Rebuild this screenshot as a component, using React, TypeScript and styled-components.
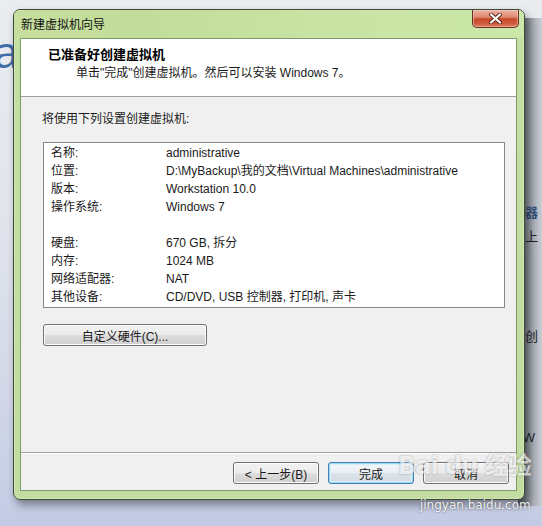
import React from "react";
import styled, { createGlobalStyle } from "styled-components";

const GlobalStyle = createGlobalStyle`
  html, body { margin: 0; padding: 0; }
  body { font-family: "Liberation Sans", "Noto Sans CJK SC", sans-serif; }
`;

const FONT = `"Liberation Sans", "Noto Sans CJK SC", sans-serif`;

const Page = styled.div`
  position: relative;
  width: 542px;
  height: 526px;
  overflow: hidden;
  box-sizing: border-box;
  padding: 9px 0 0 13px;
  background: linear-gradient(180deg, #eaecf0 0%, #e2e5ec 40%, #d2d8e8 75%, #c3cbe4 100%);
  font-family: ${FONT};
`;

const BackPanel = styled.div`
  position: absolute;
  left: 518px;
  top: 18px;
  width: 24px;
  height: 488px;
  background: linear-gradient(90deg, #5c6169 0%, #7c828b 30%, #a9aeb7 65%, #c9cdd4 100%);
`;

const BackText = styled.div<{ $top: number; $bold?: boolean }>`
  position: absolute;
  left: 512px;
  top: ${(p) => p.$top}px;
  font-size: 13px;
  line-height: 16px;
  white-space: nowrap;
  font-weight: ${(p) => (p.$bold ? 700 : 400)};
  color: ${(p) => (p.$bold ? "#34507a" : "#1e2228")};
`;

const BigLetter = styled.div`
  position: absolute;
  left: -6px;
  top: 26px;
  font-family: "Open Sans", sans-serif;
  font-size: 44px;
  line-height: 50px;
  color: #3f6ea8;
`;

const Window = styled.div`
  position: relative;
  z-index: 1;
  width: 512px;
  height: 491px;
  box-sizing: border-box;
  border: 1px solid #3d4a38;
  border-radius: 7px;
  background: linear-gradient(180deg, #c9e3a8 0%, #c3dea0 8%, #c2dd9f 100%);
  box-shadow: 0 0 0 1px rgba(255, 255, 255, 0.25) inset, 3px 5px 8px rgba(0, 0, 0, 0.4);
  display: flex;
  flex-direction: column;
`;

const TitleBar = styled.div`
  height: 28px;
  flex: none;
  display: flex;
  align-items: flex-start;
  justify-content: space-between;
  padding: 0 5px 0 7px;
  border-radius: 6px 6px 0 0;
  background: linear-gradient(90deg, #c6df9f 0%, #c2dc9a 25%, #c9e3a4 60%, #cbe8a8 100%);
`;

const Title = styled.div`
  font-size: 12px;
  line-height: 28px;
  padding-top: 1px;
  color: #111;
`;

const CloseButton = styled.div`
  width: 47px;
  height: 18px;
  flex: none;
  box-sizing: border-box;
  border: 1px solid #6a3024;
  border-top: none;
  border-radius: 0 0 5px 5px;
  background: linear-gradient(180deg, #ecb3a2 0%, #de8a72 42%, #c84a2c 52%, #cf5d3e 80%, #dc7d5b 100%);
  box-shadow: inset 0 0 0 1px rgba(255, 220, 210, 0.45);
  display: flex;
  align-items: center;
  justify-content: center;
`;

const Client = styled.div`
  flex: 1;
  margin: 0 7px 8px 6px;
  border: 1px solid #7f9a6c;
  background: #f0f0f0;
  display: flex;
  flex-direction: column;
  min-height: 0;
`;

const Header = styled.div`
  flex: none;
  background: #fff;
  border-bottom: 1px solid #a0a0a0;
  padding: 7px 0 0 27px;
  box-sizing: border-box;
  height: 58px;
`;

const HeaderTitle = styled.div`
  font-size: 13px;
  line-height: 18px;
  font-weight: 700;
  color: #000;
`;

const HeaderSub = styled.div`
  font-size: 12px;
  line-height: 18px;
  margin-left: 28px;
  color: #1a1a1a;
`;

const Body = styled.div`
  flex: 1;
  padding: 13px 11px 0 21px;
  display: flex;
  flex-direction: column;
`;

const Intro = styled.div`
  font-size: 12px;
  line-height: 18px;
  color: #1a1a1a;
`;

const ListBox = styled.div`
  margin: 14px 0 0 1px;
  height: 166px;
  box-sizing: border-box;
  border: 1px solid #828790;
  background: #fff;
  padding: 1px 0 0 7px;
  display: grid;
  grid-template-columns: 115px 1fr;
  grid-auto-rows: 18px;
  align-content: start;
`;

const Cell = styled.div`
  font-size: 12px;
  line-height: 18px;
  color: #1a1a1a;
  white-space: nowrap;
`;

const Blank = styled.div`
  grid-column: 1 / 3;
`;

const Button = styled.button<{ $w: number; $default?: boolean }>`
  width: ${(p) => p.$w}px;
  height: 22px;
  box-sizing: border-box;
  padding: 0;
  font-family: ${FONT};
  font-size: 12px;
  color: #1a1a1a;
  border-radius: 3px;
  border: 1px solid ${(p) => (p.$default ? "#3c7fb1" : "#707070")};
  background: ${(p) =>
    p.$default
      ? "linear-gradient(180deg, #f4f7f9 0%, #eaeff3 50%, #dce3e9 51%, #d2dbe2 100%)"
      : "linear-gradient(180deg, #f2f2f2 0%, #ebebeb 50%, #dddddd 51%, #cfcfcf 100%)"};
  box-shadow: ${(p) =>
    p.$default ? "inset 0 0 0 1px #9fdcf4, inset 0 0 0 2px #d8eff9" : "inset 0 0 0 1px #fcfcfc"};
  display: flex;
  align-items: center;
  justify-content: center;
`;

const CustomButton = styled(Button)`
  margin: 16px 0 0 1px;
`;

const Footer = styled.div`
  flex: none;
  border-top: 1px solid #a0a0a0;
  box-shadow: inset 0 1px 0 #fff;
  padding: 9px 7px 6px 0;
  display: flex;
  justify-content: flex-end;
  gap: 9px;
`;

const Watermark = styled.div`
  position: absolute;
  left: 398px;
  top: 452px;
  z-index: 2;
  display: flex;
  flex-direction: column;
  align-items: flex-end;
  color: rgba(255, 255, 255, 0.85);
  text-shadow: 0 0 2px rgba(90, 90, 90, 0.7);
  pointer-events: none;
`;

const Logo = styled.div`
  font-family: "DejaVu Sans", "Noto Sans CJK SC", sans-serif;
  font-size: 24px;
  font-weight: 700;
  line-height: 28px;
  letter-spacing: -1px;
  opacity: 0.75;
`;

const Site = styled.div`
  margin-top: 18px;
  font-family: "DejaVu Sans", sans-serif;
  font-size: 12px;
  line-height: 14px;
  color: rgba(255, 255, 255, 0.9);
  text-shadow: 0 0 2px rgba(60, 60, 60, 0.8);
`;

const rows1: [string, string][] = [
  ["名称:", "administrative"],
  ["位置:", "D:\\MyBackup\\我的文档\\Virtual Machines\\administrative"],
  ["版本:", "Workstation 10.0"],
  ["操作系统:", "Windows 7"],
];
const rows2: [string, string][] = [
  ["硬盘:", "670 GB, 拆分"],
  ["内存:", "1024 MB"],
  ["网络适配器:", "NAT"],
  ["其他设备:", "CD/DVD, USB 控制器, 打印机, 声卡"],
];

export default function App() {
  return (
    <Page>
      <GlobalStyle />
      <BigLetter>a</BigLetter>
      <BackPanel />
      <BackText $top={205} $bold>务器</BackText>
      <BackText $top={229}>导上</BackText>
      <BackText $top={307} $bold>机</BackText>
      <BackText $top={329}>机创</BackText>
      <BackText $top={430}>e W</BackText>
      <Window>
        <TitleBar>
          <Title>新建虚拟机向导</Title>
          <CloseButton>
            <svg width="13" height="11" viewBox="0 0 13 11">
              <path d="M2 1.5 L11 9.5 M11 1.5 L2 9.5" stroke="#5a2418" strokeWidth="4" strokeLinecap="round" />
              <path d="M2 1.5 L11 9.5 M11 1.5 L2 9.5" stroke="#ffffff" strokeWidth="2.2" strokeLinecap="round" />
            </svg>
          </CloseButton>
        </TitleBar>
        <Client>
          <Header>
            <HeaderTitle>已准备好创建虚拟机</HeaderTitle>
            <HeaderSub>单击"完成"创建虚拟机。然后可以安装 Windows 7。</HeaderSub>
          </Header>
          <Body>
            <Intro>将使用下列设置创建虚拟机:</Intro>
            <ListBox>
              {rows1.map(([k, v]) => (
                <React.Fragment key={k}>
                  <Cell>{k}</Cell>
                  <Cell>{v}</Cell>
                </React.Fragment>
              ))}
              <Blank />
              {rows2.map(([k, v]) => (
                <React.Fragment key={k}>
                  <Cell>{k}</Cell>
                  <Cell>{v}</Cell>
                </React.Fragment>
              ))}
            </ListBox>
            <CustomButton $w={164}>自定义硬件(C)...</CustomButton>
          </Body>
          <Footer>
            <Button $w={86}>&lt; 上一步(B)</Button>
            <Button $w={86} $default>完成</Button>
            <Button $w={86}>取消</Button>
          </Footer>
        </Client>
      </Window>
      <Watermark>
        <Logo>Bai du 经验</Logo>
        <Site>jingyan.baidu.com</Site>
      </Watermark>
    </Page>
  );
}
